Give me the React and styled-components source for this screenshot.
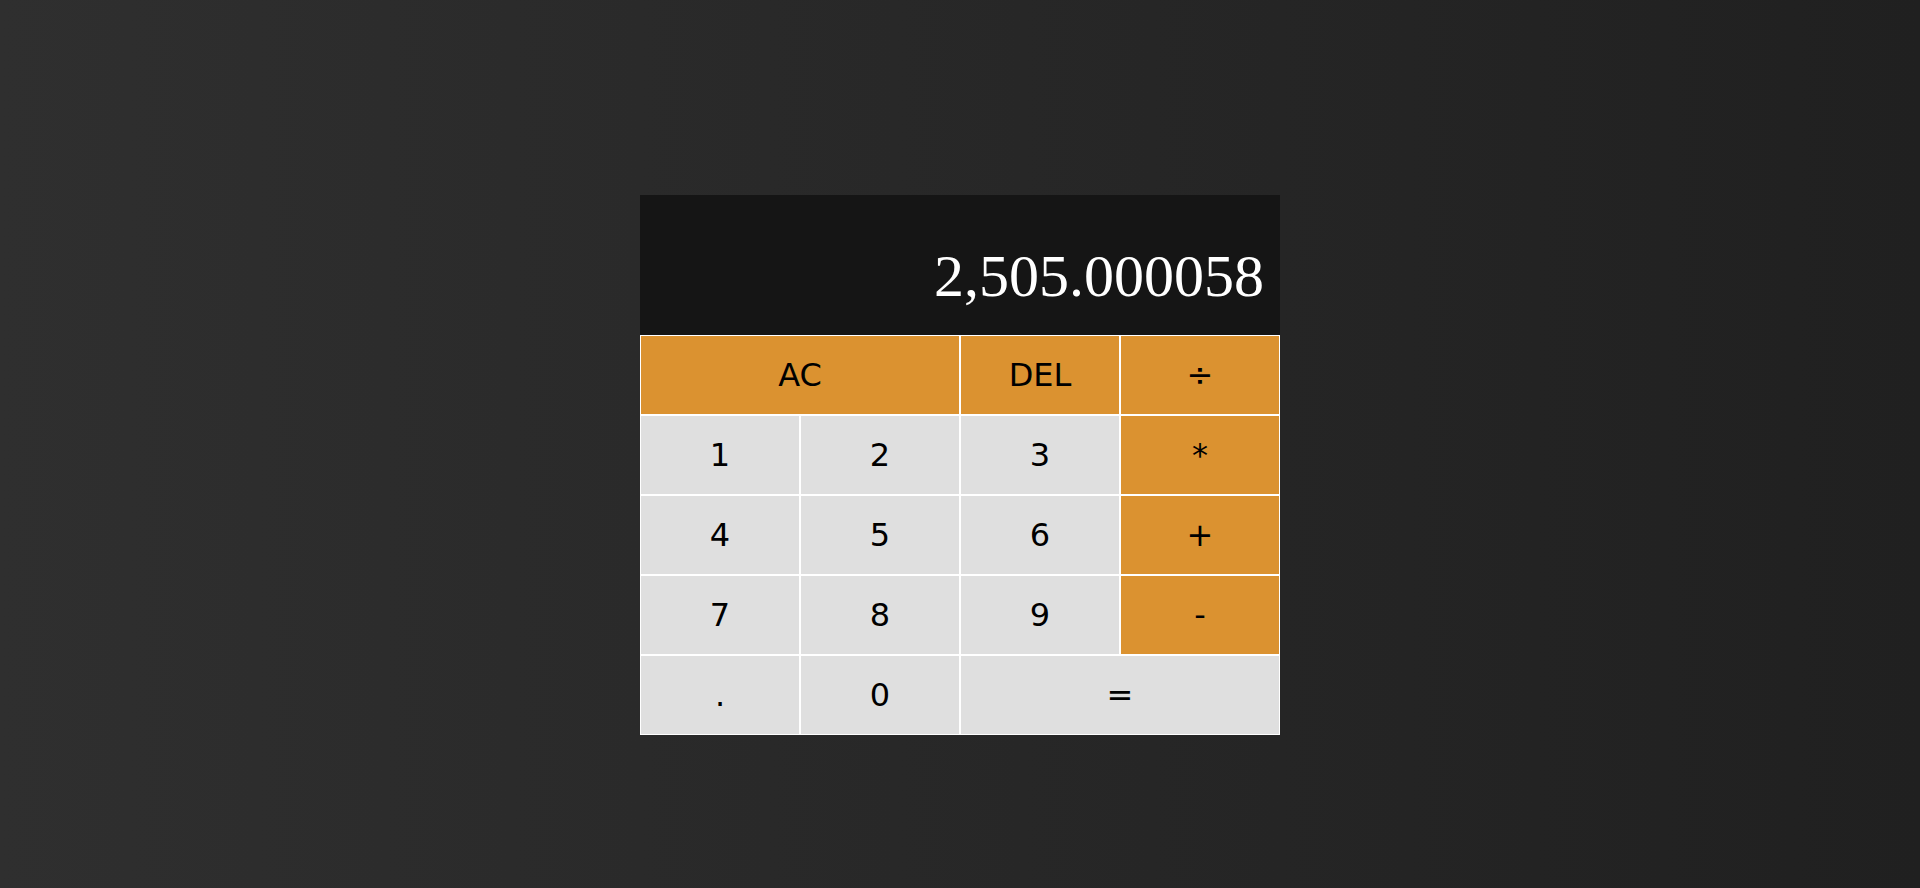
import React from 'react'
import styled, { createGlobalStyle } from 'styled-components';

const GlobalStyle = createGlobalStyle`
    *, *::before, *::after {
        box-sizing: border-box;
    }

    body {
        margin: 0;
        background: linear-gradient(to right, #2f2f2f, #202020);
    }
`;

export const Page = styled.div`
    min-height: 100vh;
    padding-top: 42px;
    display: flex;
    justify-content: center;
    align-items: center;
`;

export const CalculatorGrid = styled.div`
    display: grid;
    grid-template-columns: repeat(4, 160px);
    grid-template-rows: 140px repeat(5, 80px);
`;

export const Output = styled.div`
    grid-column: 1 / -1;
    background: #151515;
    display: flex;
    flex-direction: column;
    align-items: flex-end;
    justify-content: flex-end;
    padding: 10px 16px 24px;
    word-wrap: break-word;
    word-break: break-all;
`;

export const PreviousOperand = styled.div`
    color: rgba(255, 255, 255, 0.75);
    font-family: "Liberation Serif", serif;
    font-size: 24px;
`;

export const CurrentOperand = styled.div`
    color: white;
    font-family: "Liberation Serif", serif;
    font-size: 60px;
`;

export const CalcButton = styled.button`
    grid-column: ${props => props.span ? `span ${props.span}` : 'auto'};
    font-family: "DejaVu Sans", Verdana, sans-serif;
    font-size: 32px;
    color: black;
    border: 1px solid white;
    outline: none;
    cursor: pointer;
    padding: 0;
    background: ${props => props.operator ? '#db9230' : '#dfdfdf'};

    &:hover {
        opacity: 0.9;
    }
`;

const keys = [
    { label: 'AC', span: 2, operator: true },
    { label: 'DEL', operator: true },
    { label: '÷', operator: true },
    { label: '1' }, { label: '2' }, { label: '3' },
    { label: '*', operator: true },
    { label: '4' }, { label: '5' }, { label: '6' },
    { label: '+', operator: true },
    { label: '7' }, { label: '8' }, { label: '9' },
    { label: '-', operator: true },
    { label: '.' }, { label: '0' },
    { label: '=', span: 2 },
];

function App() {
    return (
        <>
            <GlobalStyle />
            <Page>
                <CalculatorGrid>
                    <Output>
                        <PreviousOperand></PreviousOperand>
                        <CurrentOperand>2,505.000058</CurrentOperand>
                    </Output>
                    {keys.map(k => (
                        <CalcButton key={k.label} span={k.span} operator={k.operator}>{k.label}</CalcButton>
                    ))}
                </CalculatorGrid>
            </Page>
        </>
    )
}

export default App
